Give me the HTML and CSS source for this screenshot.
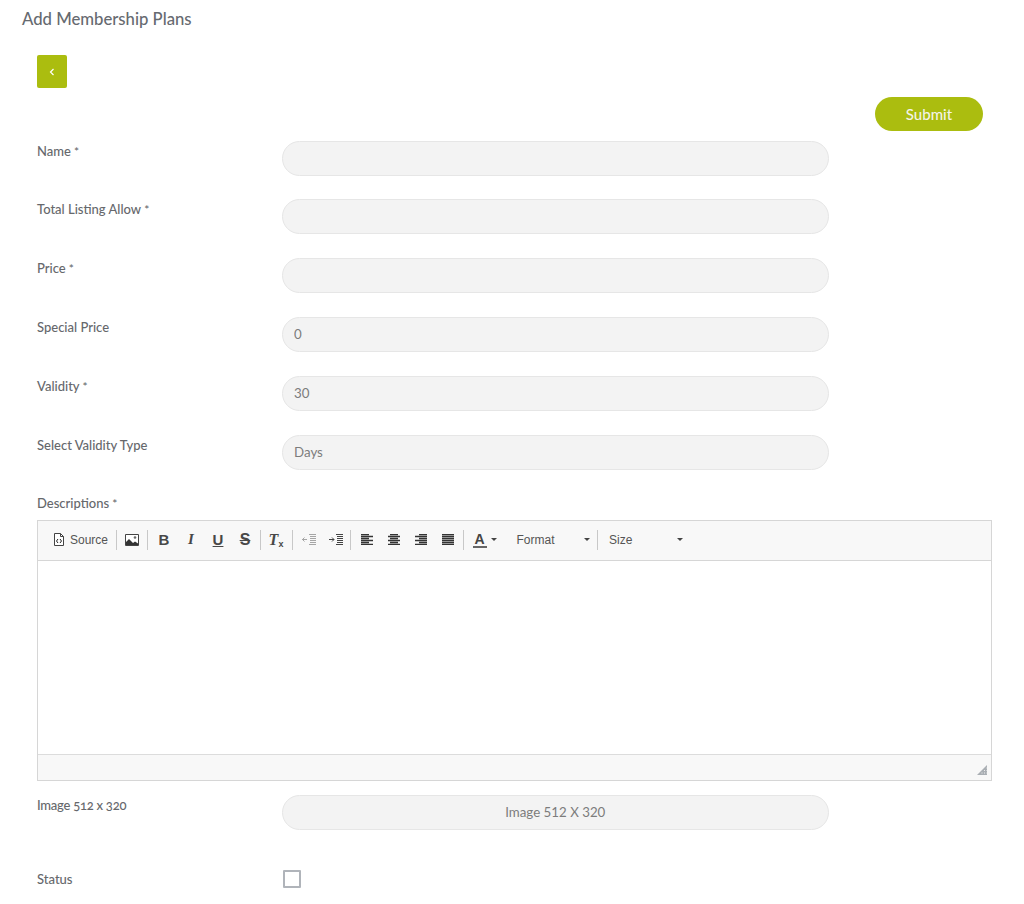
FILE: index.html
```html
<!DOCTYPE html>
<html lang="en">
<head>
<meta charset="utf-8">
<title>Add Membership Plans</title>
<link rel="stylesheet" href="styles.css">
</head>
<body>
<main class="page">
  <h1 class="title">Add Membership Plans</h1>
  <a class="back" href="#"><svg width="6" height="8" viewBox="0 0 6 8"><path d="M4.500 1 1.500 4l3 3" fill="none" stroke="#fff" stroke-width="1.200"/></svg></a>
  <div class="actions"><button class="submit" type="button">Submit</button></div>
  <form class="form">
    <div class="row"><label class="label">Name<span class="req">*</span></label><input class="field" type="text"></div>
    <div class="row"><label class="label">Total Listing Allow<span class="req">*</span></label><input class="field" type="text"></div>
    <div class="row"><label class="label">Price<span class="req">*</span></label><input class="field" type="text"></div>
    <div class="row"><label class="label">Special Price</label><input class="field" type="text" value="0"></div>
    <div class="row"><label class="label">Validity<span class="req">*</span></label><input class="field" type="text" value="30"></div>
    <div class="row"><label class="label">Select Validity Type</label><div class="field select">Days</div></div>
    <label class="label desc">Descriptions<span class="req">*</span></label>
    <div class="editor">
      <div class="toolbar">
        <span class="tool source">
          <svg width="12" height="13" viewBox="0 0 12 13"><path d="M1.500.5h6l3 3v9h-9z" fill="#fff" stroke="#444"/><path d="M7.500.5v3h3" fill="none" stroke="#444"/><path d="M5 6 3.500 8 5 10M7 6l1.500 2L7 10" fill="none" stroke="#222"/></svg>
          <span class="tool-text">Source</span>
        </span>
        <i class="sep"></i>
        <span class="tool wide">
          <svg width="14" height="12" viewBox="0 0 14 12"><rect width="14" height="12" rx="1" fill="#444"/><rect x="1" y="1" width="12" height="10" fill="#fff"/><circle cx="10" cy="3.500" r="1.300" fill="#666"/><path d="M1 11V8l3-3 4 4 2-1.500 3 2V11z" fill="#333"/></svg>
        </span>
        <i class="sep"></i>
        <span class="group-b">
          <span class="tool glyph bold">B</span>
          <span class="tool glyph italic">I</span>
          <span class="tool glyph under">U</span>
          <span class="tool glyph strike">S</span>
        </span>
        <i class="sep"></i>
        <span class="tool clear-btn glyph italic">T<small class="sub">x</small></span>
        <i class="sep"></i>
        <span class="group-b">
          <span class="tool">
            <svg class="faded" width="14" height="12" viewBox="0 0 14 12"><path d="M7 .5h7M8 2.500h6M8 4.500h6M8 6.500h6M8 8.500h6M7 10.500h7M0 5.500h5M2.500 3.500l-2 2 2 2" fill="none" stroke="#444"/></svg>
          </span>
          <span class="tool">
            <svg width="14" height="12" viewBox="0 0 14 12"><path d="M7 .5h7M8 2.500h6M8 4.500h6M8 6.500h6M8 8.500h6M7 10.500h7M0 5.500h5M3 3.500l2 2-2 2" fill="none" stroke="#444"/></svg>
          </span>
        </span>
        <i class="sep"></i>
        <span class="group-b">
          <span class="tool"><svg width="12" height="11" viewBox="0 0 12 11"><path d="M0 .5h8M0 2.500h12M0 4.500h8M0 6.500h12M0 8.500h8M0 10.500h12" fill="none" stroke="#333" stroke-width="1.300"/></svg></span>
          <span class="tool"><svg width="12" height="11" viewBox="0 0 12 11"><path d="M2 .5h8M0 2.500h12M2 4.500h8M0 6.500h12M2 8.500h8M0 10.500h12" fill="none" stroke="#333" stroke-width="1.300"/></svg></span>
          <span class="tool"><svg width="12" height="11" viewBox="0 0 12 11"><path d="M4 .5h8M0 2.500h12M4 4.500h8M0 6.500h12M4 8.500h8M0 10.500h12" fill="none" stroke="#333" stroke-width="1.300"/></svg></span>
          <span class="tool"><svg width="12" height="11" viewBox="0 0 12 11"><path d="M0 .5h12M0 2.500h12M0 4.500h12M0 6.500h12M0 8.500h12M0 10.500h12" fill="none" stroke="#333" stroke-width="1.300"/></svg></span>
        </span>
        <i class="sep"></i>
        <span class="color"><span class="color-a">A</span><i class="caret"></i></span>
        <span class="combo format"><span class="tool-text">Format</span><i class="caret"></i></span>
        <i class="sep"></i>
        <span class="combo size"><span class="tool-text">Size</span><i class="caret"></i></span>
      </div>
      <div class="content"></div>
      <div class="statusbar">
        <svg width="10" height="10" viewBox="0 0 10 10"><path d="M10 0v10H0z" fill="#a9aeb3"/><path d="M10 2.500v1M7.500 5v1M5 7.500v1M7.500 7.500v1M10 5v1M10 7.500v1" stroke="#eee"/></svg>
      </div>
    </div>
    <div class="row image-row"><label class="label image-label">Image 512 x 320</label><div class="field upload">Image 512 X 320</div></div>
    <div class="status-row"><label class="label">Status</label><input class="check" type="checkbox"></div>
  </form>
</main>
</body>
</html>
```
FILE: styles.css
```css
* { box-sizing: border-box; }
html, body { margin: 0; height: 904px; overflow: hidden; background: #fff; }
body { font-family: "Lato", "Open Sans", sans-serif; color: #666; }
.page { padding: 9px 32px 0 37px; }
.title { margin: 0 0 0 -15px; font-size: 16.700px; line-height: 20px; font-weight: 500; color: #666a70; }
.back { display: flex; align-items: center; justify-content: center; width: 30px; height: 33px; margin-top: 26px; background: #abbd0f; border-radius: 2px; }
.actions { display: flex; justify-content: flex-end; margin-top: 9px; padding-right: 9px; }
.submit { width: 108px; height: 34px; border: 0; border-radius: 17px; background: #abbd0f; color: #f4f4e8; font: 500 15px/34px "Lato", sans-serif; padding: 0; }
.form { margin-top: 9.600px; }
.row { display: grid; grid-template-columns: 245px 547px; height: 35px; margin-bottom: 23.800px; }
.label { display: block; font-size: 13px; line-height: 20px; font-weight: 500; color: #66686c; }
.image-label { font-variant-numeric: oldstyle-nums; letter-spacing: -0.250px; }
.req { margin-left: 3px; font-size: 12px; }
.field { display: block; width: 546.500px; height: 35px; margin: 0; padding: 0 11px; border: 1px solid #e6e6e6; border-radius: 18px; background: #f3f3f3; font: 400 13.300px/33px "Lato", sans-serif; color: #7c7c7c; outline: 0; }
.upload { text-align: center; }
.desc { margin-top: 0; margin-bottom: 6px; }
.editor { width: 955px; height: 261px; border: 1px solid #d6d6d6; display: flex; flex-direction: column; }
.toolbar { display: flex; align-items: center; height: 40px; padding: 0 0 2px 14px; background: #f8f8f8; border-bottom: 1px solid #d6d6d6; flex: none; }
.tool { display: flex; align-items: center; justify-content: center; width: 27px; height: 20px; flex: none; }
.tool.wide { width: 30px; }
.clear-btn { width: 31px; }
.source { width: 64px; justify-content: flex-start; padding-left: 1px; gap: 5px; }
.tool-text { font: 12px/16px "Liberation Sans", Arial, sans-serif; color: #555; }
.sep { display: block; flex: none; width: 1px; height: 20px; background: #c8c8c8; }
.group-b { display: flex; flex: none; padding: 0 1px 0 2.500px; }
.glyph { font-family: "Liberation Sans", Arial, sans-serif; font-size: 15px; color: #484848; }
.bold { font-weight: 700; }
.italic { font-style: italic; font-weight: 700; font-family: "Liberation Serif", serif; }
.under { font-weight: 700; text-decoration: underline; }
.strike { font-weight: 700; font-size: 16px; text-decoration: line-through; }
.clear-btn.glyph { font-size: 16px; }
.sub { font-family: "Liberation Sans", sans-serif; font-size: 9px; font-style: normal; align-self: flex-end; margin-bottom: 1px; }
.faded { opacity: .45; }
.color { display: flex; align-items: center; width: 53px; padding-left: 9px; flex: none; }
.color-a { font: 700 14px/15px "Liberation Sans", sans-serif; color: #444; border-bottom: 2px solid #666; width: 14px; height: 16px; text-align: center; margin-right: 4px; }
.caret { display: block; width: 0; height: 0; border: 3px solid transparent; border-top: 3px solid #444; border-bottom: 0; flex: none; }
.combo { display: flex; align-items: center; justify-content: space-between; flex: none; }
.format { width: 80.500px; padding-right: 7px; }
.size { width: 85px; padding-left: 11px; }
.content { flex: 1; background: #fff; }
.statusbar { display: flex; align-items: center; justify-content: flex-end; height: 26px; padding: 5px 4px 0 0; background: #f8f8f8; border-top: 1px solid #dcdcdc; flex: none; }
.image-row { margin-top: 14px; margin-bottom: 0; }
.status-row { display: grid; grid-template-columns: 245px 20px; align-items: center; margin-top: 39px; height: 20px; }
.check { appearance: none; width: 18px; height: 18px; margin: 0 0 0 1px; border: 2px solid #b0b4ba; border-radius: 1px; background: #fff; }
```
